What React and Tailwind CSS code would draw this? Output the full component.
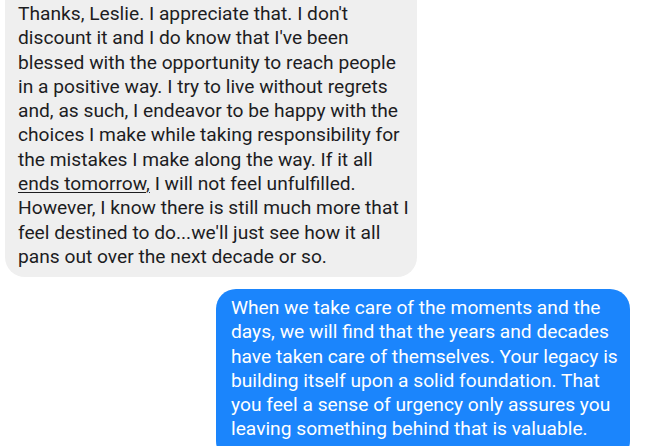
export default function App() {
  return (
    <div
      className="w-[652px] h-[446px] overflow-hidden bg-white"
      style={{ fontFamily: "Roboto, 'Noto Sans', sans-serif" }}
    >
      <div className="-mt-[20px] flex flex-col gap-[12.5px]">
        {/* Received message */}
        <div className="ml-[5px] w-[412px] rounded-[20px] bg-[#efefef] pl-[13px] pr-[6px] pt-[22px] pb-[7.5px] text-[19.2px] leading-[24.3px] text-[#1d1d1f]">
          Thanks, Leslie. I appreciate that. I don't discount it and I do know
          that I've been blessed with the opportunity to reach people in a
          positive way. I try to live without regrets and, as such, I endeavor
          to be happy with the choices I make while taking responsibility for
          the mistakes I make along the way. If it all{" "}
          <span className="underline underline-offset-[2px] decoration-[1.3px]">
            ends tomorrow,
          </span>{" "}
          I will not feel unfulfilled. However, I know there is still much more
          that I feel destined to do...we'll just see how it all pans out over
          the next decade or so.
        </div>

        {/* Sent message */}
        <div className="ml-[216px] w-[414px] rounded-[20px] bg-[#1b85fc] pl-[15px] pr-[10px] pt-[7px] pb-[20px] text-[19.2px] leading-[24.2px] text-white">
          When we take care of the moments and the days, we will find that the
          years and decades have taken care of themselves. Your legacy is
          building itself upon a solid foundation. That you feel a sense of
          urgency only assures you leaving something behind that is valuable.
        </div>
      </div>
    </div>
  );
}
